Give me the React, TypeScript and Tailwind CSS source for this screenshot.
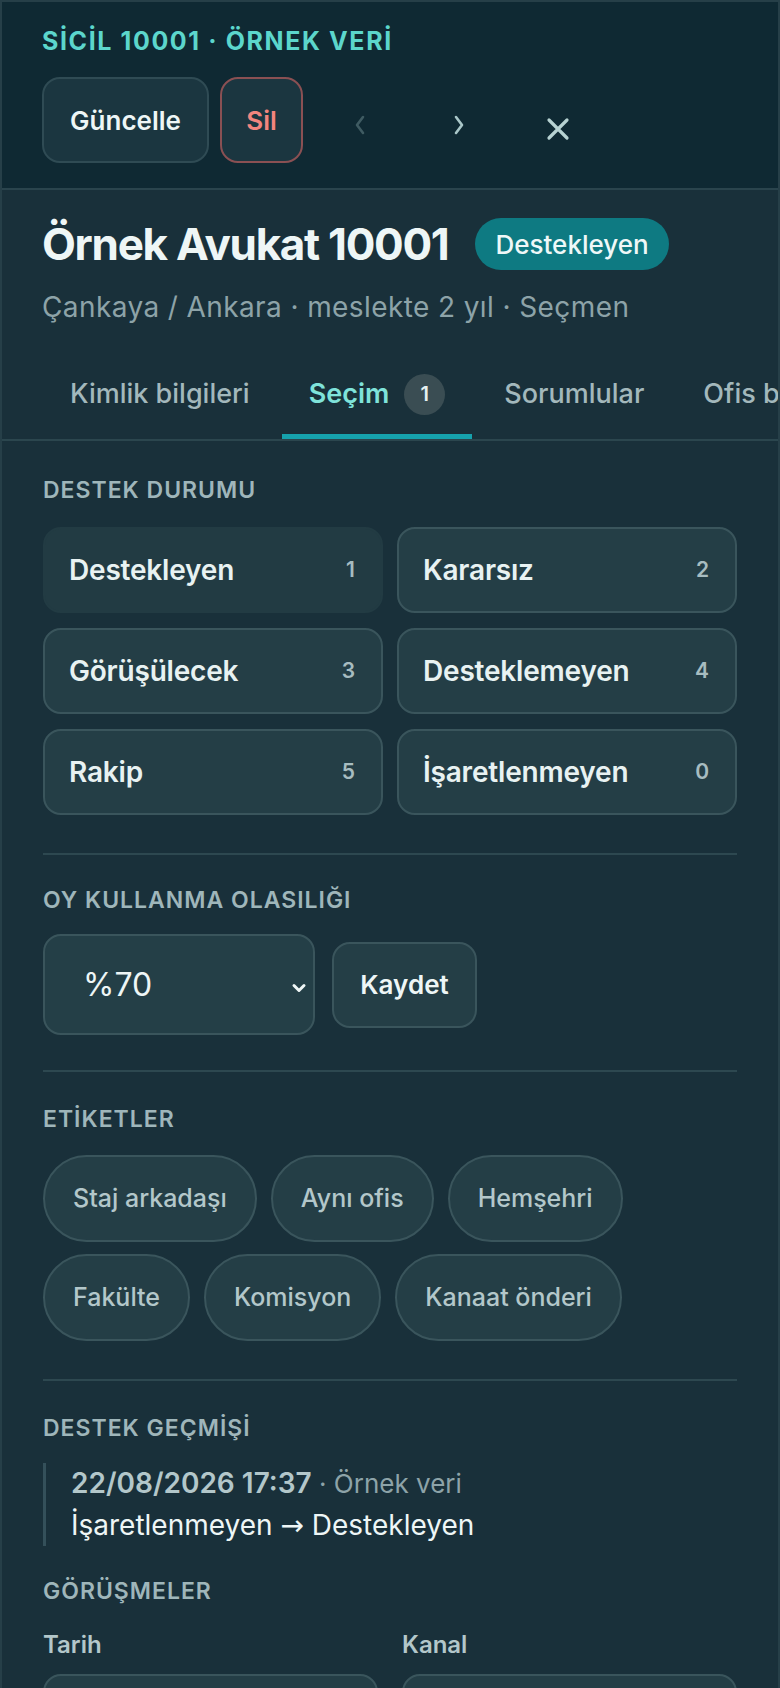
import { ChevronDown } from "lucide-react";

const statuses = [
  { label: "Destekleyen", count: 1, active: true },
  { label: "Kararsız", count: 2 },
  { label: "Görüşülecek", count: 3 },
  { label: "Desteklemeyen", count: 4 },
  { label: "Rakip", count: 5 },
  { label: "İşaretlenmeyen", count: 0 },
];

const tags = [
  "Staj arkadaşı",
  "Aynı ofis",
  "Hemşehri",
  "Fakülte",
  "Komisyon",
  "Kanaat önderi",
];

const SectionLabel = ({ children }: { children: React.ReactNode }) => (
  <h3 className="text-[23px] h-[23px] font-semibold tracking-[1px] text-[#9fb6ba] leading-none">
    {children}
  </h3>
);

export default function App() {
  return (
    <div
      className="min-h-screen bg-[#19303a] border-2 border-[#263f48] text-[#e6f0f0] overflow-hidden"
      style={{ fontFamily: "Inter, 'Noto Sans', sans-serif" }}
    >
      {/* header */}
      <div className="bg-[#0f2933] border-b-2 border-[#2a444d] px-[40px] pt-[27px] pb-[25px]">
        <p className="text-[25px] font-bold tracking-[1.6px] text-[#5cd6cc] leading-none">
          SİCİL 10001 · ÖRNEK VERİ
        </p>
        <div className="flex items-center gap-[11px] mt-[23px]">
          <button className="h-[86px] w-[167px] rounded-[18px] border-2 border-[#2f4b54] bg-[#1b3640] text-[26px] font-semibold text-[#eef6f6]">
            Güncelle
          </button>
          <button className="h-[86px] w-[83px] rounded-[18px] border-2 border-[#8a5053] bg-[#1b3640] text-[26px] font-semibold text-[#f2857e]">
            Sil
          </button>
          <div className="flex -ml-[4px]">
            <button className="h-[86px] w-[99px] flex items-center justify-center text-[#3f5b62] pt-[10px]">
              <svg width="14" height="22" viewBox="0 0 14 22" fill="none">
                <path d="M10 3 L4 11 L10 19" stroke="currentColor" strokeWidth="2.6" strokeLinecap="round" strokeLinejoin="round" />
              </svg>
            </button>
            <button className="h-[86px] w-[99px] flex items-center justify-center text-[#a9c6c8] pt-[10px]">
              <svg width="14" height="22" viewBox="0 0 14 22" fill="none">
                <path d="M4 3 L10 11 L4 19" stroke="currentColor" strokeWidth="2.6" strokeLinecap="round" strokeLinejoin="round" />
              </svg>
            </button>
            <button className="h-[86px] w-[99px] flex items-center justify-center text-[#b7d2d2] pt-[18px]">
              <svg width="24" height="24" viewBox="0 0 24 24" fill="none">
                <path d="M3 3 L21 21 M21 3 L3 21" stroke="currentColor" strokeWidth="3.2" strokeLinecap="round" />
              </svg>
            </button>
          </div>
        </div>
      </div>

      {/* title */}
      <div className="px-[40px] pt-[28px]">
        <div className="flex items-center gap-[27px]">
          <h1 className="text-[44px] font-bold tracking-[-1.3px] text-[#eef6f6] leading-none">
            Örnek Avukat 10001
          </h1>
          <span className="h-[52px] px-[20px] rounded-full bg-[#0e7a82] text-[26px] font-medium text-[#eef8f8] flex items-center">
            Destekleyen
          </span>
        </div>
        <p className="mt-[23px] text-[28px] text-[#8da3a8] leading-none tracking-[0.4px]">
          Çankaya / Ankara · meslekte 2 yıl · Seçmen
        </p>
      </div>

      {/* tabs */}
      <div className="mt-[24px] border-b-2 border-[#2b464e] pl-[41px] flex gap-[5px] whitespace-nowrap">
        <div className="px-[27px] h-[94px] pt-[4px] flex items-center text-[27px] font-medium text-[#a3b8bc]">
          Kimlik bilgileri
        </div>
        <div className="relative px-[27px] h-[94px] pt-[4px] flex items-center gap-[15px] text-[27px] font-semibold text-[#7fe3da]">
          Seçim
          <span className="h-[41px] w-[41px] rounded-full bg-[#3a4d53] text-[20px] font-semibold text-[#e6f0f0] flex items-center justify-center">
            1
          </span>
          <span className="absolute left-0 right-0 bottom-0 h-[5px] bg-[#16a2ad]" />
        </div>
        <div className="px-[27px] h-[94px] pt-[4px] flex items-center text-[27px] font-medium text-[#a3b8bc]">
          Sorumlular
        </div>
        <div className="px-[27px] h-[94px] pt-[4px] flex items-center text-[27px] font-medium text-[#a3b8bc]">
          Ofis bilgileri
        </div>
      </div>

      <div className="px-[41px] pt-[38px]">
        {/* destek durumu */}
        <SectionLabel>DESTEK DURUMU</SectionLabel>
        <div className="grid grid-cols-2 gap-x-[14px] gap-y-[15px] mt-[25px]">
          {statuses.map((s) => (
            <button
              key={s.label}
              className={`h-[86px] rounded-[18px] border-2 flex items-center justify-between pl-[24px] pr-[26px] ${
                s.active
                  ? "bg-[#223b43] border-[#223b43]"
                  : "bg-[#243e46] border-[#3a555c]"
              }`}
            >
              <span className="text-[28px] font-semibold tracking-[-0.2px] text-[#e8f2f2]">{s.label}</span>
              <span className="text-[21px] font-semibold text-[#a7bcc0]">{s.count}</span>
            </button>
          ))}
        </div>

        <div className="h-[2px] bg-[#2d4850] mt-[38px]" />

        {/* oy kullanma */}
        <div className="pt-[34px]">
          <SectionLabel>OY KULLANMA OLASILIĞI</SectionLabel>
          <div className="flex items-center gap-[17px] mt-[22px]">
            <div className="relative w-[272px]">
              <select
                defaultValue="70"
                className="appearance-none w-full h-[101px] rounded-[18px] border-2 border-[#3a555c] bg-[#243f47] pl-[38px] text-[32px] text-[#eef6f6] outline-none"
              >
                <option value="70">%70</option>
              </select>
              <ChevronDown
                className="absolute right-[6px] top-[44px] text-[#eef6f6] pointer-events-none"
                size={20}
                strokeWidth={3.6}
              />
            </div>
            <button className="h-[86px] w-[145px] rounded-[18px] border-2 border-[#3a555c] bg-[#243e46] text-[26px] font-semibold text-[#eef6f6]">
              Kaydet
            </button>
          </div>
        </div>

        <div className="h-[2px] bg-[#2d4850] mt-[35px]" />

        {/* etiketler */}
        <div className="pt-[36px]">
          <SectionLabel>ETİKETLER</SectionLabel>
          <div className="flex flex-wrap gap-x-[14px] gap-y-[12px] mt-[24px] pr-[100px]">
            {tags.map((t) => (
              <span
                key={t}
                className="h-[87px] px-[28px] rounded-full border-2 border-[#3a555c] bg-[#243e46] text-[25px] font-medium text-[#b3c7ca] flex items-center"
              >
                {t}
              </span>
            ))}
          </div>
        </div>

        <div className="h-[2px] bg-[#2d4850] mt-[38px]" />

        {/* destek gecmisi */}
        <div className="pt-[36px]">
          <SectionLabel>DESTEK GEÇMİŞİ</SectionLabel>
          <div className="mt-[23px] border-l-[3px] border-[#34505a] pl-[25px] text-[28px] leading-[41.5px]">
            <p>
              <span className="font-semibold text-[#b3c7ca]">22/08/2026 17:37</span>
              <span className="text-[26px] text-[#8da3a8]"> · Örnek veri</span>
            </p>
            <p className="text-[#eef6f6]">
              İşaretlenmeyen{" "}
              <span style={{ fontFamily: "'DejaVu Sans', sans-serif" }} className="text-[28px]">
                →
              </span>{" "}
              Destekleyen
            </p>
          </div>
        </div>

        {/* gorusmeler */}
        <div className="pt-[34px]">
          <SectionLabel>GÖRÜŞMELER</SectionLabel>
          <div className="grid grid-cols-2 gap-x-[24px] mt-[30px]">
            <div>
              <label className="block text-[24px] font-semibold text-[#b3c7ca] leading-none">Tarih</label>
              <div className="mt-[17px] h-[86px] rounded-[18px] border-2 border-[#3a555c] bg-[#243e46]" />
            </div>
            <div>
              <label className="block text-[24px] font-semibold text-[#b3c7ca] leading-none">Kanal</label>
              <div className="mt-[17px] h-[86px] rounded-[18px] border-2 border-[#3a555c] bg-[#243e46]" />
            </div>
          </div>
        </div>
      </div>
    </div>
  );
}
